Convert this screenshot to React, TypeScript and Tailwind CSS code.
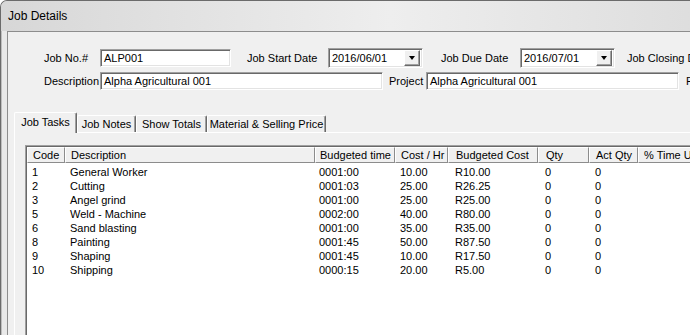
import React from 'react';

const columns = [
    { label: 'Code', w: 'w-[38px]', pl: 'pl-[5px]' },
    { label: 'Description', w: 'w-[250px]', pl: 'pl-[5px]' },
    { label: 'Budgeted time', w: 'w-[80px]', pl: 'pl-[4px]' },
    { label: 'Cost / Hr', w: 'w-[53px]', pl: 'pl-[5px]' },
    { label: 'Budgeted Cost', w: 'w-[90px]', pl: 'pl-[7px]' },
    { label: 'Qty', w: 'w-[51px]', pl: 'pl-[7px]' },
    { label: 'Act Qty', w: 'w-[49px]', pl: 'pl-[6px]' },
    { label: '% Time Used', w: 'w-[90px]', pl: 'pl-[5px]' },
];

const rows = [
    ['1', 'General Worker', '0001:00', '10.00', 'R10.00', '0', '0', ''],
    ['2', 'Cutting', '0001:03', '25.00', 'R26.25', '0', '0', ''],
    ['3', 'Angel grind', '0001:00', '25.00', 'R25.00', '0', '0', ''],
    ['5', 'Weld - Machine', '0002:00', '40.00', 'R80.00', '0', '0', ''],
    ['6', 'Sand blasting', '0001:00', '35.00', 'R35.00', '0', '0', ''],
    ['8', 'Painting', '0001:45', '50.00', 'R87.50', '0', '0', ''],
    ['9', 'Shaping', '0001:45', '10.00', 'R17.50', '0', '0', ''],
    ['10', 'Shipping', '0000:15', '20.00', 'R5.00', '0', '0', ''],
];

const sunken =
    'border-t border-l border-[#a0a0a0] border-b-white border-r-white border-b border-r bg-white shadow-[inset_1px_1px_0_#696969,inset_-1px_-1px_0_#e3e3e3]';

const TextBox: React.FC<{ value: string; w: string; h?: string }> = ({ value, w, h = 'h-[18px]' }) => (
    <div className={`${w} ${h} shrink-0 flex items-center pl-[3px] ${sunken}`}>
        <span className="whitespace-nowrap">{value}</span>
    </div>
);

const DateCombo: React.FC<{ value: string }> = ({ value }) => (
    <div className={`w-[95px] h-[20px] shrink-0 flex items-center justify-between pl-[3px] pr-[2px] ${sunken}`}>
        <span className="whitespace-nowrap">{value}</span>
        <div className="w-[16px] h-[16px] flex items-center justify-center bg-[#f0f0f0] border-t border-l border-white border-r border-b border-r-[#696969] border-b-[#696969] shadow-[inset_-1px_-1px_0_#a0a0a0]">
            <div className="w-0 h-0 border-l-[3.5px] border-r-[3.5px] border-t-[4px] border-l-transparent border-r-transparent border-t-black" />
        </div>
    </div>
);

const tabs = [
    { label: 'Job Notes', w: 'w-[59px]' },
    { label: 'Show Totals', w: 'w-[71px]' },
    { label: 'Material & Selling Price', w: 'w-[119px]' },
];

export default function App() {
    return (
        <div className="w-[690px] h-[335px] overflow-hidden font-['Liberation_Sans',Arial,sans-serif] text-[11px] text-black bg-white">
            <div className="w-[780px] h-[345px] flex flex-col rounded-tl-[7px] border-l border-t border-[#6b6b6b] bg-[#e9e9e9] shadow-[inset_1px_1px_0_#bdbdbd]">
                <div className="h-[30px] shrink-0 flex items-center pl-[7px] text-[12px] rounded-tl-[6px] bg-gradient-to-r from-[#d7d7d7] via-[#eeeeee] to-[#d9d9d9]">
                    Job Details
                </div>

                <div className="flex-1 ml-[6px] flex flex-col pt-[16px] border-l border-t border-[#8d8d8d] bg-[#f0f0f0]">
                    <div className="h-[20px] flex items-center">
                        <span className="w-[92px] shrink-0 pl-[36px] whitespace-nowrap">Job No.#</span>
                        <TextBox value="ALP001" w="w-[131px]" />
                        <span className="w-[97px] shrink-0 pl-[16px] whitespace-nowrap">Job Start Date</span>
                        <DateCombo value="2016/06/01" />
                        <span className="w-[97px] shrink-0 pl-[18px] whitespace-nowrap">Job Due Date</span>
                        <DateCombo value="2016/07/01" />
                        <span className="shrink-0 pl-[12px] whitespace-nowrap">Job Closing Date</span>
                    </div>
                    <div className="h-[18px] mt-[4px] flex items-center">
                        <span className="w-[92px] shrink-0 pl-[36px] whitespace-nowrap">Description</span>
                        <TextBox value="Alpha Agricultural 001" w="w-[283px]" />
                        <span className="w-[43px] shrink-0 pl-[6px] whitespace-nowrap">Project</span>
                        <TextBox value="Alpha Agricultural 001" w="w-[253px]" />
                        <span className="shrink-0 pl-[7px] whitespace-nowrap">F</span>
                    </div>

                    <div className="mt-[22px] ml-[6px] h-[20px] flex items-end">
                        <div className="relative z-10 w-[63px] h-[21px] -mb-px flex items-center justify-center pb-[2px] bg-[#f0f0f0] rounded-t-[2px] border-l border-t border-white border-r border-r-[#696969] shadow-[inset_-1px_0_0_#a0a0a0]">
                            Job Tasks
                        </div>
                        {tabs.map((t) => (
                            <div
                                key={t.label}
                                className={`${t.w} h-[17px] shrink-0 flex items-center justify-center whitespace-nowrap bg-[#f0f0f0] rounded-t-[2px] border-l border-t border-white border-r border-r-[#696969] shadow-[inset_-1px_0_0_#a0a0a0]`}
                            >
                                {t.label}
                            </div>
                        ))}
                    </div>

                    <div className="flex-1 ml-[6px] pl-[10px] pt-[12px] border-l border-t border-white flex flex-col">
                        <div className="flex-1 border-l border-t border-[#a0a0a0] flex flex-col">
                            <div className="flex-1 border-l border-t border-[#696969] bg-white flex flex-col">
                                <div className="h-[16px] flex">
                                    {columns.map((c) => (
                                        <div
                                            key={c.label}
                                            className={`${c.w} ${c.pl} shrink-0 flex items-center whitespace-nowrap overflow-hidden bg-[#f0f0f0] border-l border-t border-white border-r border-b border-r-[#8c8c8c] border-b-[#8c8c8c]`}
                                        >
                                            {c.label}
                                        </div>
                                    ))}
                                </div>
                                <div className="pt-[2px] flex flex-col">
                                    {rows.map((r) => (
                                        <div key={r[0]} className="h-[14px] flex items-center">
                                            {r.map((v, i) => (
                                                <div key={i} className={`${columns[i].w} ${columns[i].pl} shrink-0 whitespace-nowrap leading-[14px]`}>
                                                    {v}
                                                </div>
                                            ))}
                                        </div>
                                    ))}
                                </div>
                            </div>
                        </div>
                    </div>
                </div>
            </div>
        </div>
    );
}
